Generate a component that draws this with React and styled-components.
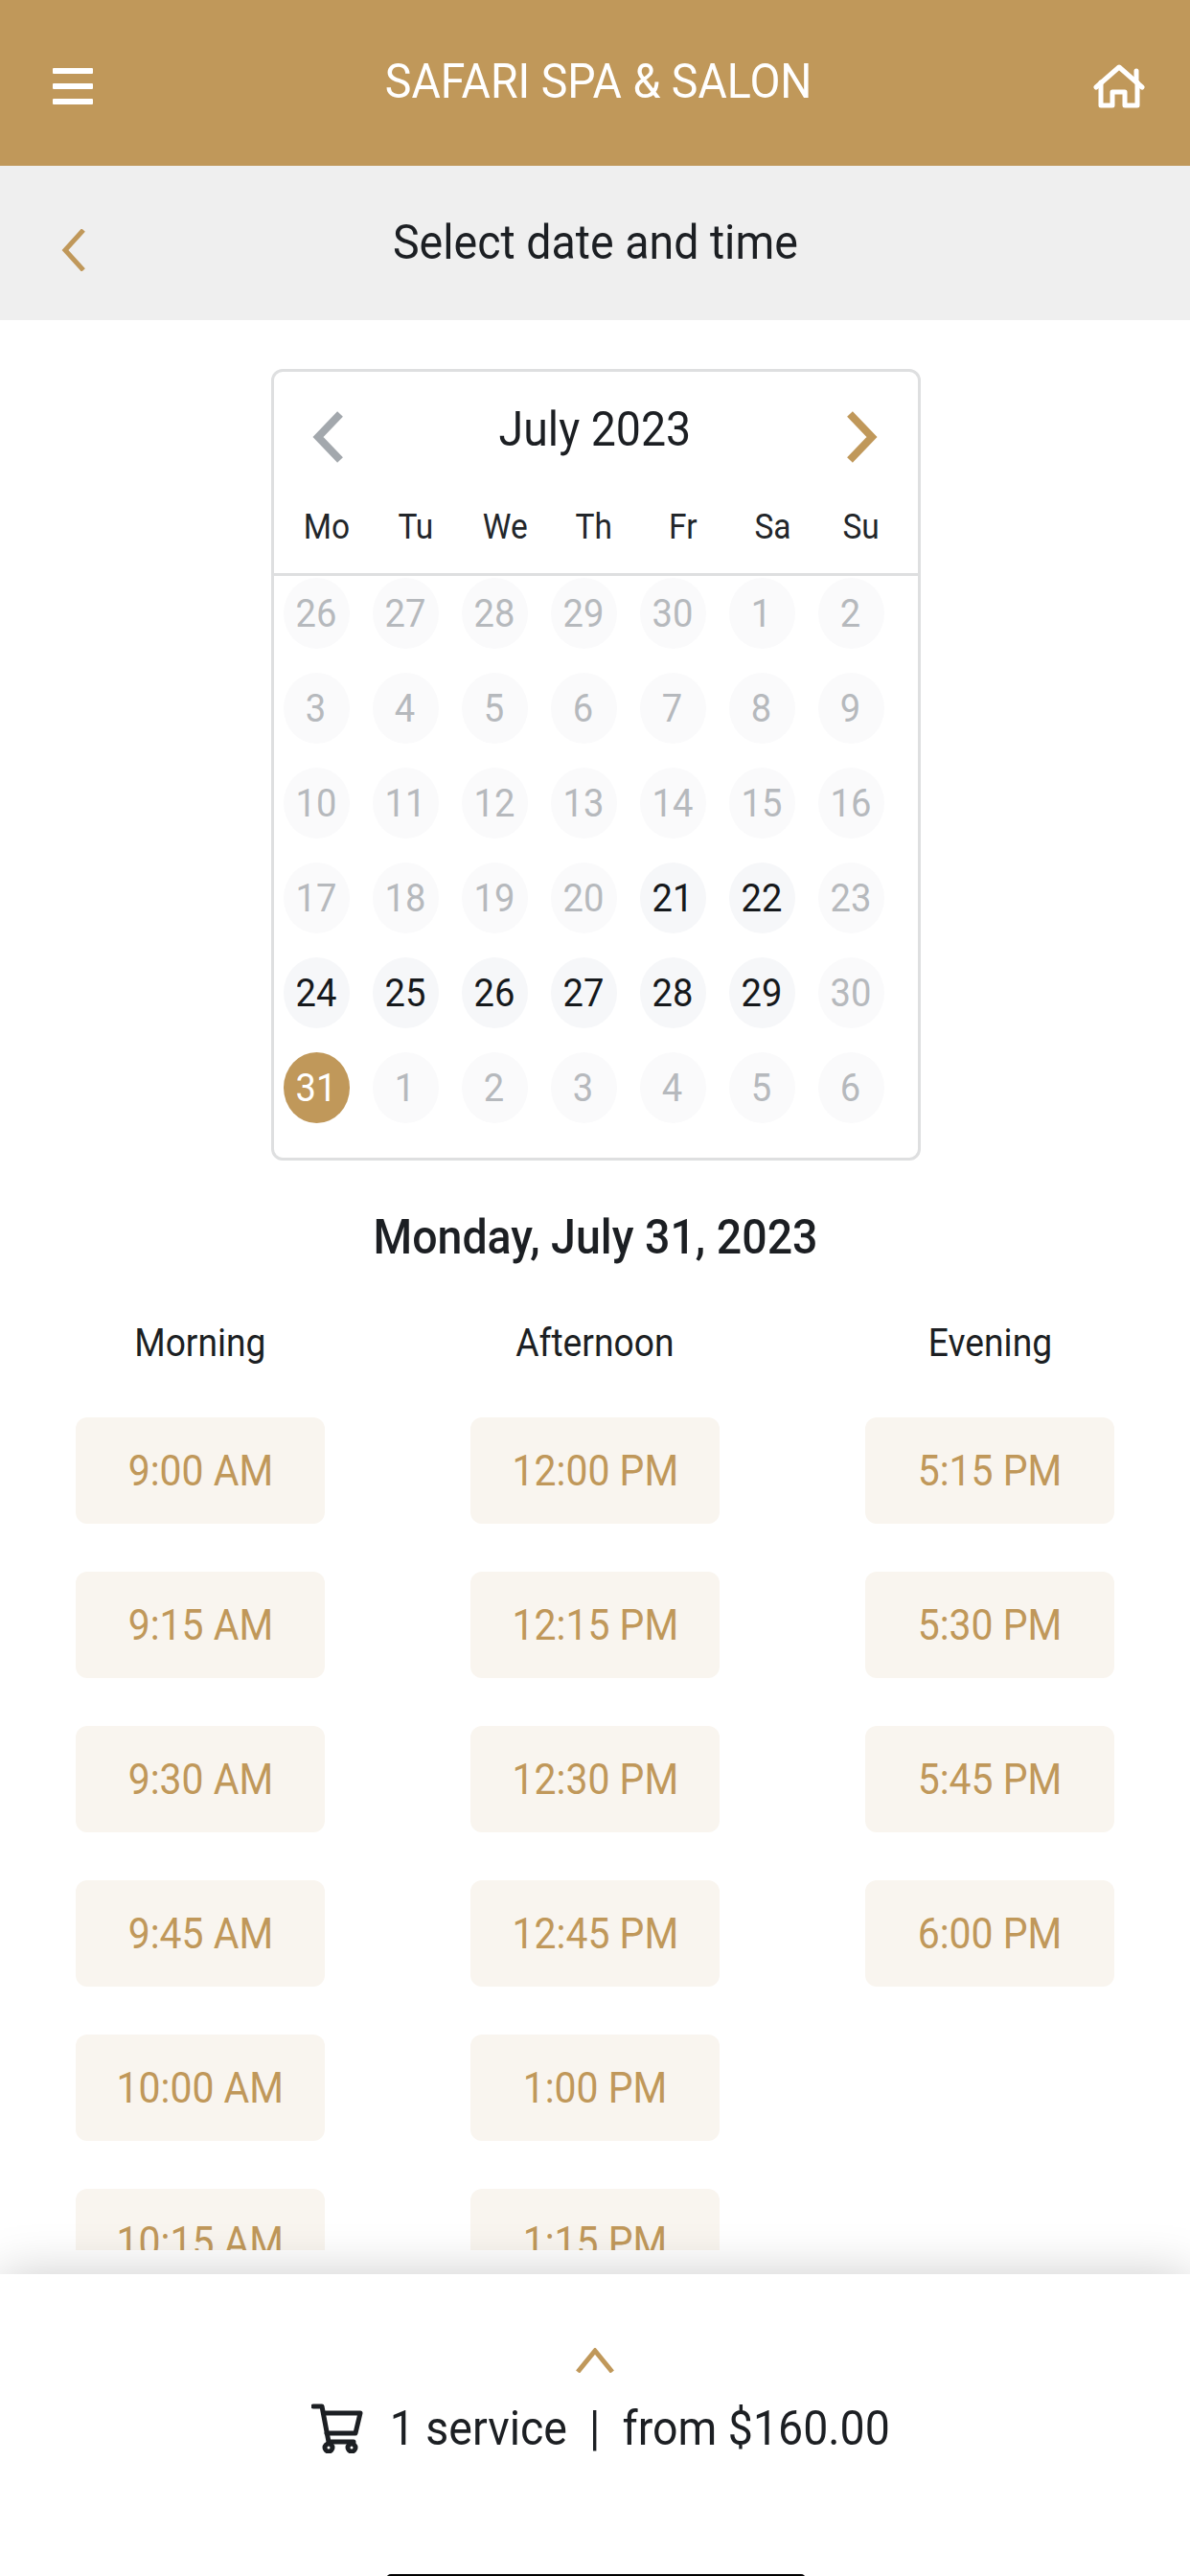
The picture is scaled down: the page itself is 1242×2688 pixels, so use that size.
import React from "react";
import styled, { createGlobalStyle } from "styled-components";

const gold = "#c0985a";

const Global = createGlobalStyle`
  html, body { margin: 0; padding: 0; background: #fff; }
  body { font-family: Roboto, "Liberation Sans", sans-serif; color: #1c1f23; }
`;

const Page = styled.div`
  width: 1242px;
  height: 2688px;
  overflow: hidden;
  display: flex;
  flex-direction: column;
`;
const Squeezed = styled.span`
  display: inline-block;
  transform: scaleX(0.93);
  white-space: pre;
`;
const TopBar = styled.header`
  height: 173px;
  flex: none;
  background: ${gold};
  color: #fff;
  display: grid;
  grid-template-columns: 1fr auto 1fr;
  align-items: center;
  padding: 0 47px 0 55px;
  font-size: 50px;
`;
const BrandTitle = styled(Squeezed)`
  margin-bottom: 4px;
`;
const BurgerBtn = styled.div`
  width: 42px;
  margin-top: 6px;
  display: flex;
  flex-direction: column;
  gap: 10px;
  span { height: 6px; background: #fff; border-radius: 1px; }
`;
const HomeBtn = styled.div`
  justify-self: end;
  line-height: 0;
  margin-top: 6px;
`;
const SubBar = styled.div`
  height: 161px;
  flex: none;
  background: #efefef;
  display: grid;
  grid-template-columns: 1fr auto 1fr;
  align-items: center;
  padding: 0 64px;
  font-size: 50px;
  svg { margin-top: 14px; display: block; }
`;
const SubTitle = styled(Squeezed)`
  margin-bottom: 2px;
`;
const Main = styled.main`
  height: 2014px;
  flex: none;
  overflow: hidden;
  display: flex;
  flex-direction: column;
  align-items: center;
`;
const Calendar = styled.section`
  width: 678px;
  height: 826px;
  flex: none;
  box-sizing: border-box;
  margin: 51px 0 0 1px;
  border: 3px solid #dedfe0;
  border-radius: 12px;
`;
const MonthRow = styled.div`
  display: flex;
  justify-content: space-between;
  align-items: center;
  padding: 41px 42px 0 40px;
  height: 54px;
  font-size: 50px;
`;
const MonthTitle = styled(Squeezed)`
  margin-bottom: 16px;
`;
const WeekRow = styled.div`
  display: grid;
  grid-template-columns: repeat(7, 93px);
  padding: 26px 0 8px 9px;
  height: 81px;
  align-items: center;
  font-size: 36px;
  text-align: center;
  border-bottom: 3px solid #dedfe0;
  color: #22262a;
`;
const DayGrid = styled.div`
  display: grid;
  grid-template-columns: repeat(7, 93px);
  grid-auto-rows: 99px;
  padding-top: 2px;
`;
const Day = styled.div`
  width: 69px;
  height: 74px;
  margin-left: 10px;
  border-radius: 50%;
  display: flex;
  align-items: center;
  justify-content: center;
  font-size: 41px;
  background: ${(p) => (p.$selected ? gold : p.$open ? "#f6f7f9" : "#fafafb")};
  color: ${(p) => (p.$selected ? "#fff" : p.$open ? "#16191c" : "#b6b9bd")};
`;
const DateHeading = styled.h2`
  margin: 53px 0 0;
  font-size: 50px;
  font-weight: 500;
  line-height: 54px;
  color: #1c1f23;
`;
const Slots = styled.div`
  width: 1236px;
  display: grid;
  grid-template-columns: repeat(3, 412px);
  margin-top: 62px;
`;
const SlotColumn = styled.div`
  display: flex;
  flex-direction: column;
  align-items: center;
  gap: 50px;
`;
const ColumnTitle = styled.div`
  font-size: 40px;
  line-height: 44px;
  height: 44px;
  margin-bottom: 5px;
  color: #1c1f23;
`;
const Slot = styled.div`
  width: 260px;
  height: 111px;
  flex: none;
  border-radius: 12px;
  background: #f9f5ef;
  color: ${gold};
  font-size: 44px;
  display: flex;
  align-items: center;
  justify-content: center;
`;
const Footer = styled.footer`
  position: relative;
  z-index: 1;
  margin-top: 25px;
  flex: 1;
  background: #fff;
  box-shadow: 0 0 50px rgba(0, 0, 0, 0.2);
  display: flex;
  flex-direction: column;
  align-items: center;
`;
const ExpandBtn = styled.div`
  margin-top: 77px;
  line-height: 0;
`;
const Summary = styled.div`
  margin-top: 30px;
  padding-left: 32px;
  display: flex;
  align-items: center;
  gap: 8px;
  font-size: 50px;
  line-height: 56px;
  color: #1c1f23;
`;
const HomeIndicator = styled.div`
  position: absolute;
  left: 403px;
  bottom: -8px;
  width: 438px;
  height: 10px;
  border-radius: 5px;
  background: #000;
`;

const weeks = [
  [26, 27, 28, 29, 30, 1, 2],
  [3, 4, 5, 6, 7, 8, 9],
  [10, 11, 12, 13, 14, 15, 16],
  [17, 18, 19, 20, 21, 22, 23],
  [24, 25, 26, 27, 28, 29, 30],
  [31, 1, 2, 3, 4, 5, 6],
];
const openDays = new Set(["3-4", "3-5", "4-0", "4-1", "4-2", "4-3", "4-4", "4-5"]);
const weekdays = ["Mo", "Tu", "We", "Th", "Fr", "Sa", "Su"];
const columns = [
  { title: "Morning", slots: ["9:00 AM", "9:15 AM", "9:30 AM", "9:45 AM", "10:00 AM", "10:15 AM"] },
  { title: "Afternoon", slots: ["12:00 PM", "12:15 PM", "12:30 PM", "12:45 PM", "1:00 PM", "1:15 PM"] },
  { title: "Evening", slots: ["5:15 PM", "5:30 PM", "5:45 PM", "6:00 PM"] },
];

const Chevron = ({ points, color, width, height, stroke }) => (
  <svg width={width} height={height} viewBox={`0 0 ${width} ${height}`} fill="none">
    <polyline points={points} stroke={color} strokeWidth={stroke} />
  </svg>
);

const HomeIcon = () => (
  <svg width="54" height="48" viewBox="0 0 54 48" fill="none" stroke="#fff" strokeWidth="5" strokeLinejoin="round" strokeLinecap="round">
    <path d="M3 25 L27 4 L51 25" />
    <path d="M8 20 V44 H20 V30 H33 V44 H46 V20" />
    <path d="M45 8 V17" />
  </svg>
);

const CartIcon = () => (
  <svg width="54" height="52" viewBox="0 0 54 52" fill="none" stroke="#1c1f23" strokeWidth="5" strokeLinejoin="round" strokeLinecap="round">
    <path d="M2 3 H11 L18 40 H44" />
    <path d="M13 10 H51 L46 31 H16" />
    <circle cx="18" cy="46" r="4" />
    <circle cx="42" cy="46" r="4" />
  </svg>
);

export default function App() {
  return (
    <Page>
      <Global />
      <TopBar>
        <BurgerBtn><span /><span /><span /></BurgerBtn>
        <BrandTitle>SAFARI SPA &amp; SALON</BrandTitle>
        <HomeBtn><HomeIcon /></HomeBtn>
      </TopBar>
      <SubBar>
        <Chevron width="26" height="44" points="23,1 4,22 23,43" color={gold} stroke="5" />
        <SubTitle>Select date and time</SubTitle>
      </SubBar>
      <Main>
        <Calendar>
          <MonthRow>
            <Chevron width="32" height="54" points="29,3 6,27 29,51" color="#a3a8ad" stroke="8" />
            <MonthTitle>July 2023</MonthTitle>
            <Chevron width="32" height="54" points="3,3 26,27 3,51" color={gold} stroke="8" />
          </MonthRow>
          <WeekRow>
            {weekdays.map((d) => <div key={d}><Squeezed>{d}</Squeezed></div>)}
          </WeekRow>
          <DayGrid>
            {weeks.map((row, r) =>
              row.map((n, c) => (
                <Day key={`${r}-${c}`} $open={openDays.has(`${r}-${c}`)} $selected={r === 5 && c === 0}>
                  <Squeezed>{n}</Squeezed>
                </Day>
              ))
            )}
          </DayGrid>
        </Calendar>
        <DateHeading><Squeezed>Monday, July 31, 2023</Squeezed></DateHeading>
        <Slots>
          {columns.map((col) => (
            <SlotColumn key={col.title}>
              <ColumnTitle><Squeezed>{col.title}</Squeezed></ColumnTitle>
              {col.slots.map((s) => <Slot key={s}><Squeezed>{s}</Squeezed></Slot>)}
            </SlotColumn>
          ))}
        </Slots>
      </Main>
      <Footer>
        <ExpandBtn>
          <Chevron width="40" height="26" points="2,25 20,3 38,25" color={gold} stroke="5" />
        </ExpandBtn>
        <Summary>
          <CartIcon />
          <Squeezed>1 service  |  from $160.00</Squeezed>
        </Summary>
        <HomeIndicator />
      </Footer>
    </Page>
  );
}
